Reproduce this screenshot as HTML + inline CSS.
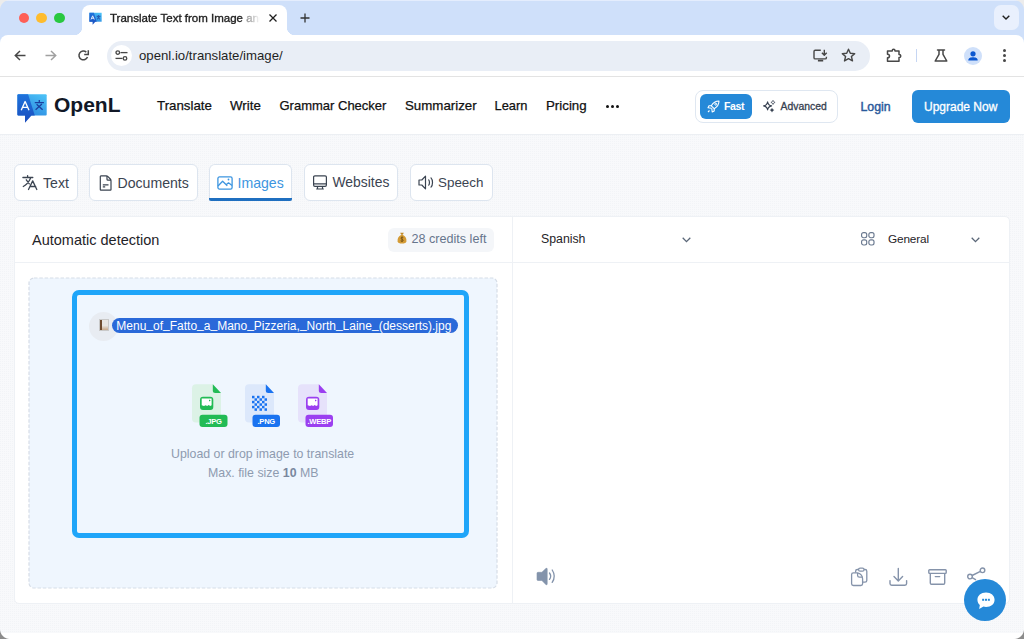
<!DOCTYPE html>
<html><head><meta charset="utf-8">
<style>
*{box-sizing:border-box;margin:0;padding:0}
html,body{width:1024px;height:639px;overflow:hidden;background:#fff;font-family:"Liberation Sans",sans-serif}
.a{position:absolute}
.t{position:absolute;white-space:nowrap;line-height:1}
svg{position:absolute;overflow:visible}
/* chrome */
#strip{left:0;top:0;width:1024px;height:44px;background:#cfe0fa}
#toolbar{left:0;top:35px;width:1024px;height:42px;background:#fff;border-bottom:1px solid #e3e3e3}
#page{left:0;top:77px;width:1024px;height:556px;background:#f8f9fb}
.nav{font-size:13.3px;color:#111;-webkit-text-stroke:0.25px #111}
.tabbtn{top:164px;height:37px;background:#fff;border:1px solid #dde5ef;border-radius:6px}
.tabtxt{font-size:14.1px;color:#3b4451}
</style></head><body>
<!-- tab strip -->
<div id="strip" class="a"></div>
<div class="a" style="left:0;top:0;width:1024px;height:1px;background:#e4edfd"></div>
<!-- traffic lights -->
<div class="a" style="left:18.5px;top:12.7px;width:10.8px;height:10.8px;border-radius:50%;background:#fe5f57"></div>
<div class="a" style="left:36.3px;top:12.7px;width:10.8px;height:10.8px;border-radius:50%;background:#febc2e"></div>
<div class="a" style="left:54.1px;top:12.7px;width:10.8px;height:10.8px;border-radius:50%;background:#28c840"></div>
<!-- active tab -->
<div class="a" style="left:82px;top:5px;width:205px;height:30px;background:#fff;border-radius:8px 8px 0 0"></div>
<div class="a" style="left:74px;top:27px;width:8px;height:8px;background:radial-gradient(circle at 0 0,#cfe0fa 8px,#fff 8.5px)"></div>
<div class="a" style="left:287px;top:27px;width:8px;height:8px;background:radial-gradient(circle at 100% 0,#cfe0fa 8px,#fff 8.5px)"></div>
<svg style="left:88.3px;top:11px" width="15.05" height="15.05" viewBox="0 0 36 36"><defs><linearGradient id="fgl" x1="0" y1="0" x2="0" y2="1"><stop offset="0" stop-color="#1f73dc"/><stop offset="1" stop-color="#1a4dbd"/></linearGradient><linearGradient id="fgr" x1="1" y1="0" x2="0.3" y2="1"><stop offset="0" stop-color="#4ec5f8"/><stop offset="1" stop-color="#2a86df"/></linearGradient></defs><path d="M3.4 4.2H32.7V25.6H3.4Z" fill="url(#fgr)"/><path d="M3.4 4.2H14.1L20.8 25.6H17.5L11 32.7V25.6H3.4Z" fill="url(#fgl)"/><path d="M7.2 20.3L11.1 11.5L15 20.3M8.6 17.3H13.6" stroke="#fff" stroke-width="2" fill="none"/><path d="M20.8 12.6H29.9M25.3 10.1V12.6M22.6 14.2L28.6 19.8M27.9 14L21.6 19.8" stroke="#1b3f9e" stroke-width="2" fill="none"/></svg>
<div class="t" style="left:110px;top:12.5px;font-size:11.5px;color:#1f1f1f;-webkit-text-stroke:0.35px #1f1f1f;width:150px;overflow:hidden;-webkit-mask-image:linear-gradient(90deg,#000 0,#000 87%,rgba(0,0,0,0.5) 91%,rgba(0,0,0,0.25) 96%,transparent 100%)">Translate Text from Image and Photo</div>
<svg style="left:269px;top:14px" width="8" height="8" viewBox="0 0 8 8"><path d="M0.5 0.5L7.5 7.5M7.5 0.5L0.5 7.5" stroke="#1f1f1f" stroke-width="1.3"/></svg>
<svg style="left:300px;top:13px" width="10" height="10" viewBox="0 0 10 10"><path d="M5 0.5V9.5M0.5 5H9.5" stroke="#333" stroke-width="1.3"/></svg>
<div class="a" style="left:994px;top:5px;width:25px;height:25px;border-radius:7px;background:#e9f0fd"></div>
<svg style="left:1002px;top:15px" width="8" height="5" viewBox="0 0 8 5"><path d="M0.7 0.7L4 4L7.3 0.7" stroke="#1f1f1f" stroke-width="1.4" fill="none"/></svg>

<!-- toolbar -->
<div id="toolbar" class="a" style="border-radius:8px 8px 0 0"></div>
<svg style="left:14px;top:50px" width="12" height="11" viewBox="0 0 12 11"><path d="M11.5 5.5H1.5M6 1L1.3 5.5L6 10" stroke="#474747" stroke-width="1.5" fill="none"/></svg>
<svg style="left:45px;top:50px" width="12" height="11" viewBox="0 0 12 11"><path d="M0.5 5.5H10.5M6 1L10.7 5.5L6 10" stroke="#a0a0a0" stroke-width="1.5" fill="none"/></svg>
<svg style="left:77px;top:49px" width="13" height="13" viewBox="0 0 13 13"><path d="M10.5 8A4.4 4.4 0 1 1 9.3 3.1" stroke="#474747" stroke-width="1.5" fill="none"/><path d="M7.2 5.4H11.3V1.2" stroke="#474747" stroke-width="1.5" fill="none"/></svg>
<div class="a" style="left:107px;top:41px;width:763px;height:30px;border-radius:15px;background:#e9eef6"></div>
<div class="a" style="left:111px;top:45px;width:21px;height:21px;border-radius:50%;background:#fff"></div>
<svg style="left:115px;top:50px" width="13" height="11" viewBox="0 0 13 11"><circle cx="2.8" cy="2.6" r="1.8" stroke="#474747" stroke-width="1.3" fill="none"/><path d="M5.5 2.6H12.5" stroke="#474747" stroke-width="1.3"/><circle cx="10" cy="8.4" r="1.8" stroke="#474747" stroke-width="1.3" fill="none"/><path d="M0.5 8.4H7.5" stroke="#474747" stroke-width="1.3"/></svg>
<div class="t" style="left:139px;top:49px;font-size:13.2px;color:#1f1f1f">openl.io/translate/image/</div>
<svg style="left:806px;top:42px" width="30" height="24" viewBox="0 0 30 24"><g stroke="#474747" fill="none" stroke-linejoin="round"><path d="M14.8 8.3H9.2Q8 8.3 8 9.5V15.7Q8 16.9 9.2 16.9H19.2Q20.4 16.9 20.4 15.7V14.8" stroke-width="1.4"/><path d="M11.9 18.6H17.2" stroke-width="1.8"/><path d="M18.3 7.8V13M15.9 10.8L18.3 13.2L20.7 10.8" stroke-width="1.4"/></g></svg>
<svg style="left:841px;top:48px" width="15" height="15" viewBox="0 0 15 15"><path d="M7.5 1.2L9.3 5.3L13.7 5.6L10.4 8.5L11.5 12.9L7.5 10.6L3.5 12.9L4.6 8.5L1.3 5.6L5.7 5.3Z" stroke="#474747" stroke-width="1.4" fill="none" stroke-linejoin="round"/></svg>
<svg style="left:880px;top:44px" width="24" height="24" viewBox="0 0 24 24"><path d="M7.5 6.9H12.2Q12.2 5.3 13.6 5.3Q15 5.3 15 6.9H19V10.4Q20.8 10.4 20.8 12Q20.8 13.6 19 13.6V17.3H7.5V13.8Q9.5 13.8 9.5 12Q9.5 10.2 7.5 10.2Z" stroke="#474747" stroke-width="1.5" fill="none" stroke-linejoin="round"/></svg>
<div class="a" style="left:916px;top:49px;width:1px;height:13px;background:#c6d6f3"></div>
<svg style="left:934px;top:48px" width="14" height="15" viewBox="0 0 14 15"><path d="M3.5 2H10.5M5 2V6.3L1.2 13H12.8L9 6.3V2" stroke="#474747" stroke-width="1.5" fill="none" stroke-linejoin="round" stroke-linecap="round"/></svg>
<div class="a" style="left:964px;top:47px;width:18px;height:18px;border-radius:50%;background:#cfe0fa"></div>
<svg style="left:966px;top:49px" width="14" height="14" viewBox="0 0 14 14"><circle cx="7" cy="4.8" r="2.6" fill="#0b57d0"/><path d="M2.3 11.5C2.3 9 4.5 8.3 7 8.3C9.5 8.3 11.7 9 11.7 11.5Z" fill="#0b57d0"/></svg>
<div class="a" style="left:1003px;top:49.1px;width:3px;height:3px;border-radius:50%;background:#474747"></div>
<div class="a" style="left:1003px;top:54.1px;width:3px;height:3px;border-radius:50%;background:#474747"></div>
<div class="a" style="left:1003px;top:59.2px;width:3px;height:3px;border-radius:50%;background:#474747"></div>

<!-- page -->
<div id="page" class="a"><svg style="left:0;top:0" width="1024" height="556"><defs><pattern id="dots" width="2" height="2" patternUnits="userSpaceOnUse"><rect x="0" y="0" width="1" height="1" fill="#f2f4f7"/></pattern></defs><rect width="1024" height="556" fill="url(#dots)"/></svg></div>
<!-- navbar -->
<div class="a" style="left:0;top:77px;width:1024px;height:58px;background:#fff;border-bottom:1px solid #eceff3"></div>

<!-- logo -->
<svg style="left:14px;top:90px" width="36" height="36" viewBox="0 0 36 36"><defs><linearGradient id="lgl" x1="0" y1="0" x2="0" y2="1"><stop offset="0" stop-color="#1f73dc"/><stop offset="1" stop-color="#1a4dbd"/></linearGradient><linearGradient id="lgr" x1="1" y1="0" x2="0.3" y2="1"><stop offset="0" stop-color="#4ec5f8"/><stop offset="1" stop-color="#2a86df"/></linearGradient></defs><path d="M3.4 5.2Q3.4 4.2 4.4 4.2H31.7Q32.7 4.2 32.7 5.2V24.6Q32.7 25.6 31.7 25.6H4.4Q3.4 25.6 3.4 24.6Z" fill="url(#lgr)"/><path d="M4.4 4.2H14.1L20.8 25.6H17.5L11 32.7V25.6H4.4Q3.4 25.6 3.4 24.6V5.2Q3.4 4.2 4.4 4.2Z" fill="url(#lgl)"/><path d="M7.2 20.3L11.1 11.5L15 20.3M8.6 17.3H13.6" stroke="#fff" stroke-width="1.35" fill="none" stroke-linejoin="round"/><path d="M20.8 12.6H29.9M25.3 10.1V12.6M22.6 14.2L28.6 19.8M27.9 14L21.6 19.8" stroke="#1b3f9e" stroke-width="1.3" fill="none"/></svg>
<div class="t" style="left:54px;top:93.7px;font-size:21px;font-weight:bold;color:#111827">OpenL</div>
<div class="t nav" style="left:157px;top:99px">Translate</div>
<div class="t nav" style="left:230px;top:99px">Write</div>
<div class="t nav" style="left:279.5px;top:99px;font-size:13px">Grammar Checker</div>
<div class="t nav" style="left:405px;top:99px">Summarizer</div>
<div class="t nav" style="left:494.5px;top:99.5px;font-size:12.9px">Learn</div>
<div class="t nav" style="left:546px;top:99px">Pricing</div>
<div class="a" style="left:606px;top:105px;width:3px;height:3px;border-radius:50%;background:#111"></div>
<div class="a" style="left:611px;top:105px;width:3px;height:3px;border-radius:50%;background:#111"></div>
<div class="a" style="left:616px;top:105px;width:3px;height:3px;border-radius:50%;background:#111"></div>
<!-- mode toggle -->
<div class="a" style="left:695px;top:89.5px;width:143px;height:33px;border:1px solid #dfe7f1;border-radius:8px;background:#fff"></div>
<div class="a" style="left:699.5px;top:94px;width:52.5px;height:24.5px;border-radius:6px;background:#2589d8"></div>
<svg style="left:707px;top:100px" width="13" height="13" viewBox="0 0 13 13"><path d="M12 1C8.5 1 6 2.8 4.3 5.8L7.2 8.7C10.2 7 12 4.5 12 1Z" stroke="#fff" stroke-width="1.1" fill="none" stroke-linejoin="round"/><path d="M4.3 5.8H2L1 7.8L4.6 8.2M7.2 8.7V11L5.2 12L4.8 8.4" stroke="#fff" stroke-width="1.1" fill="none" stroke-linejoin="round"/><circle cx="8.8" cy="4.2" r="1" stroke="#fff" stroke-width="1" fill="none"/><path d="M2.5 10.5L1 12" stroke="#fff" stroke-width="1.1"/></svg>
<div class="t" style="left:724px;top:100.6px;font-size:10.6px;letter-spacing:-0.4px;font-weight:bold;color:#fff">Fast</div>
<svg style="left:763px;top:100px" width="13" height="13" viewBox="0 0 13 13"><path d="M4.6 1.8C5 4.4 6 5.4 8.6 5.9C6 6.4 5 7.4 4.6 10C4.2 7.4 3.2 6.4 0.6 5.9C3.2 5.4 4.2 4.4 4.6 1.8Z" stroke="#374151" stroke-width="1.1" fill="none" stroke-linejoin="round"/><path d="M10 0.3L10.7 1.7L12.1 2.4L10.7 3.1L10 4.5L9.3 3.1L7.9 2.4L9.3 1.7Z" stroke="#374151" stroke-width="0.7" fill="none"/><path d="M9 7.8L9.8 9.3L11.3 10.1L9.8 10.9L9 12.4L8.2 10.9L6.7 10.1L8.2 9.3Z" fill="#374151"/></svg>
<div class="t" style="left:780.5px;top:101.8px;font-size:10.4px;color:#374151;-webkit-text-stroke:0.3px #374151">Advanced</div>
<div class="t" style="left:860.5px;top:101px;font-size:12.3px;color:#2a5a9c;-webkit-text-stroke:0.45px #2a5a9c">Login</div>
<div class="a" style="left:912px;top:89.5px;width:98px;height:33.5px;border-radius:6px;background:#2589d8"></div>
<div class="t" style="left:924px;top:101.3px;font-size:12px;color:#fff;-webkit-text-stroke:0.3px #fff">Upgrade Now</div>

<!-- mode tabs -->
<div class="a tabbtn" style="left:14px;width:64px"></div>
<svg style="left:18px;top:170px" width="24" height="24" viewBox="0 0 24 24"><g stroke="#3b4451" stroke-width="1.3" fill="none" stroke-linecap="round" stroke-linejoin="round"><path d="M4.9 7.5H14.8M9.6 5.6V7.5M8.3 9.8L11.3 13.9M12.4 8.6Q10 14 5.3 16.5"/><path d="M10.5 19.5L14.7 10.9L18.8 19.5M12 16.5H17.7"/></g></svg>
<div class="t tabtxt" style="left:43px;top:175.5px">Text</div>
<div class="a tabbtn" style="left:88.5px;width:109px"></div>
<svg style="left:98.5px;top:174.5px" width="13" height="16" viewBox="0 0 13 16"><path d="M1.3 1.5Q1.3 0.9 1.9 0.9H7.3Q8.2 0.9 9 1.7L11.3 4Q12 4.8 12 5.7V14.5Q12 15.1 11.4 15.1H1.9Q1.3 15.1 1.3 14.5Z" stroke="#3b4451" stroke-width="1.2" fill="none" stroke-linejoin="round"/><path d="M8 1V4.2Q8 5.1 8.9 5.1H12M3.8 9.8H9.5M3.8 11.8H6.2" stroke="#3b4451" stroke-width="1.2" fill="none"/></svg>
<div class="t tabtxt" style="left:117.5px;top:175.5px">Documents</div>
<div class="a tabbtn" style="left:208.5px;width:83px;border-bottom:none;border-radius:6px 6px 0 0"></div>
<div class="a" style="left:208.5px;top:197.5px;width:83px;height:3px;background:#1f6fc0;border-radius:0 0 2px 2px"></div>
<svg style="left:217px;top:175.5px" width="16" height="14" viewBox="0 0 16 14"><g stroke="#3d95e0" stroke-width="1.3" fill="none" stroke-linejoin="round"><rect x="0.9" y="0.9" width="14.2" height="12.2" rx="1.6"/><path d="M1 10L5.6 5.2L10.3 9.8M9.2 8.7L11.5 6.8L15 9.5"/></g><circle cx="11.5" cy="3.5" r="0.9" fill="#3d95e0"/></svg>
<div class="t tabtxt" style="left:237.5px;top:175.5px;color:#3d95e0">Images</div>
<div class="a tabbtn" style="left:303.5px;width:94px"></div>
<svg style="left:313px;top:175px" width="14" height="15" viewBox="0 0 14 15"><g stroke="#3b4451" stroke-width="1.2" fill="none" stroke-linejoin="round"><rect x="0.6" y="0.8" width="12.8" height="10.5" rx="1.3"/><path d="M0.6 8.8H13.4M4.5 11.3V13.8M9.5 11.3V13.8M3.2 14H10.8"/></g></svg>
<div class="t tabtxt" style="left:332.5px;top:175.5px;font-size:13.9px">Websites</div>
<div class="a tabbtn" style="left:409.5px;width:83px"></div>
<svg style="left:418px;top:175px" width="16" height="15" viewBox="0 0 16 15"><path d="M1 5H3.8L7.5 1.2V13.8L3.8 10H1Z" stroke="#3b4451" stroke-width="1.2" fill="none" stroke-linejoin="round"/><path d="M10.7 4.8C11.7 5.8 11.7 9.2 10.7 10.2M13 2.8C15 4.8 15 10.2 13 12.2" stroke="#3b4451" stroke-width="1.2" fill="none" stroke-linecap="round"/></svg>
<div class="t tabtxt" style="left:438px;top:175.5px;font-size:13.4px">Speech</div>

<!-- main card -->
<div class="a" style="left:14px;top:215.5px;width:996px;height:388px;background:#fff;border:1px solid #eef1f5;border-radius:5px"></div>
<div class="a" style="left:14px;top:262px;width:996px;height:1px;background:#eef1f5"></div>
<div class="a" style="left:512px;top:216px;width:1px;height:387px;background:#eef1f5"></div>
<div class="t" style="left:32px;top:232.5px;font-size:14.5px;color:#1f2328">Automatic detection</div>
<div class="a" style="left:388px;top:227.5px;width:106px;height:24px;border-radius:6px;background:#f4f6f9"></div>
<svg style="left:397px;top:232px" width="10" height="12" viewBox="0 0 10 12"><path d="M3.2 0.8H6.8L5.8 2.8H4.2Z" fill="#c08a2a"/><path d="M4 3C1.2 4.6 0.3 7 0.6 9.2C0.9 11 2.5 11.6 5 11.6C7.5 11.6 9.1 11 9.4 9.2C9.7 7 8.8 4.6 6 3Z" fill="#d49b35"/><path d="M6.3 5.6C5.8 5.1 4 5 4 6.2C4 7.4 6.2 7 6.2 8.4C6.2 9.5 4.3 9.4 3.6 8.8M5 4.5V10" stroke="#6b4a12" stroke-width="0.8" fill="none"/></svg>
<div class="t" style="left:411.5px;top:232.5px;font-size:12.6px;color:#66758c">28 credits left</div>
<div class="t" style="left:541px;top:233px;font-size:12.3px;color:#1f2328">Spanish</div>
<svg style="left:681.5px;top:236.5px" width="9" height="6" viewBox="0 0 9 6"><path d="M0.7 0.8L4.5 4.6L8.3 0.8" stroke="#5b6778" stroke-width="1.3" fill="none"/></svg>
<svg style="left:860.7px;top:232.3px" width="13.6" height="13.6" viewBox="0 0 14 14"><g stroke="#6b7a90" stroke-width="1.2" fill="none"><rect x="0.6" y="0.6" width="5.3" height="5.3" rx="2"/><rect x="8.1" y="0.6" width="5.3" height="5.3" rx="2"/><rect x="0.6" y="8.1" width="5.3" height="5.3" rx="2"/><rect x="8.1" y="8.1" width="5.3" height="5.3" rx="2"/></g></svg>
<div class="t" style="left:888px;top:233.8px;font-size:11.8px;letter-spacing:-0.15px;color:#1f2328">General</div>
<svg style="left:971px;top:236.5px" width="9" height="6" viewBox="0 0 9 6"><path d="M0.7 0.8L4.5 4.6L8.3 0.8" stroke="#5b6778" stroke-width="1.3" fill="none"/></svg>

<!-- drop zone -->
<svg style="left:28px;top:277px" width="470" height="312" viewBox="0 0 470 312"><rect x="1" y="1" width="468" height="310" rx="5" fill="#eff6fe" stroke="#d6dde7" stroke-width="1.2" stroke-dasharray="3.5 1.8"/></svg>
<div class="a" style="left:72px;top:289.5px;width:397px;height:248px;border:5.5px solid #1fa5f9;border-radius:7px"></div>
<div class="a" style="left:89px;top:311.5px;width:29px;height:29px;border-radius:50%;background:#e8ecf2"></div>
<div class="a" style="left:98.5px;top:319px;width:10.5px;height:12px;border:0.6px solid #c9c9c9;background:linear-gradient(90deg,#6e4c30 0 2px,transparent 2px 8.3px,#6e4c30 8.3px),linear-gradient(180deg,#e8e6e3 0 55%,#c9a98a 100%)"></div>
<div class="a" style="left:112px;top:317.5px;width:346px;height:15px;border-radius:7.5px;background:#2a69d9"></div>
<div class="t" style="left:116.3px;top:319.5px;font-size:12px;color:#fff">Menu<span style="position:relative;top:-1.5px">_</span>of<span style="position:relative;top:-1.5px">_</span>Fatto<span style="position:relative;top:-1.5px">_</span>a<span style="position:relative;top:-1.5px">_</span>Mano<span style="position:relative;top:-1.5px">_</span>Pizzeria,<span style="position:relative;top:-1.5px">_</span>North<span style="position:relative;top:-1.5px">_</span>Laine<span style="position:relative;top:-1.5px">_</span>(desserts).jpg</div>

<!-- file icons -->
<svg style="left:192px;top:384px" width="36" height="44" viewBox="0 0 36 44"><path d="M4 0.3H20.8L29 9V34.3Q29 38.5 25 38.5H4Q0 38.5 0 34.5V4.3Q0 0.3 4 0.3Z" fill="#dcf2e6"/><path d="M20.8 0.3L29 9H23.3Q20.8 9 20.8 6.5Z" fill="#22bb55"/><rect x="8" y="12.8" width="13.3" height="13.3" rx="3" fill="#22bb55"/><path d="M9.7 14.5H19.6V21.2L18.2 21.9L16.7 21.1L15.2 22L13.6 21.2L12 21.9L9.7 21.3Z" fill="#fff"/><path d="M17 15.6L18.8 16.5L17 17.4Z" fill="#22bb55"/><rect x="7.5" y="30.7" width="28" height="12.2" rx="3" fill="#22bb55"/><text x="21.5" y="40.3" text-anchor="middle" font-family="Liberation Sans" font-weight="bold" font-size="7.6" fill="#fff" letter-spacing="-0.3">.JPG</text></svg>
<svg style="left:245px;top:384px" width="35.5" height="44" viewBox="0 0 35.5 44"><path d="M4 0.3H20.8L29 9V34.3Q29 38.5 25 38.5H4Q0 38.5 0 34.5V4.3Q0 0.3 4 0.3Z" fill="#dce8fb"/><path d="M20.8 0.3L29 9H23.3Q20.8 9 20.8 6.5Z" fill="#1a73f0"/><rect x="7.00" y="11.80" width="2.5" height="2.5" fill="#1a73f0"/><rect x="12.00" y="11.80" width="2.5" height="2.5" fill="#1a73f0"/><rect x="17.00" y="11.80" width="2.5" height="2.5" fill="#1a73f0"/><rect x="9.50" y="14.30" width="2.5" height="2.5" fill="#1a73f0"/><rect x="14.50" y="14.30" width="2.5" height="2.5" fill="#1a73f0"/><rect x="19.50" y="14.30" width="2.5" height="2.5" fill="#1a73f0"/><rect x="7.00" y="16.80" width="2.5" height="2.5" fill="#1a73f0"/><rect x="12.00" y="16.80" width="2.5" height="2.5" fill="#1a73f0"/><rect x="17.00" y="16.80" width="2.5" height="2.5" fill="#1a73f0"/><rect x="9.50" y="19.30" width="2.5" height="2.5" fill="#1a73f0"/><rect x="14.50" y="19.30" width="2.5" height="2.5" fill="#1a73f0"/><rect x="19.50" y="19.30" width="2.5" height="2.5" fill="#1a73f0"/><rect x="7.00" y="21.80" width="2.5" height="2.5" fill="#1a73f0"/><rect x="12.00" y="21.80" width="2.5" height="2.5" fill="#1a73f0"/><rect x="17.00" y="21.80" width="2.5" height="2.5" fill="#1a73f0"/><rect x="9.50" y="24.30" width="2.5" height="2.5" fill="#1a73f0"/><rect x="14.50" y="24.30" width="2.5" height="2.5" fill="#1a73f0"/><rect x="19.50" y="24.30" width="2.5" height="2.5" fill="#1a73f0"/><rect x="7.5" y="30.7" width="27.5" height="12.2" rx="3" fill="#1a73f0"/><text x="21.25" y="40.3" text-anchor="middle" font-family="Liberation Sans" font-weight="bold" font-size="7.6" fill="#fff" letter-spacing="-0.3">.PNG</text></svg>
<svg style="left:298px;top:384px" width="35.5" height="44" viewBox="0 0 35.5 44"><path d="M4 0.3H20.8L29 9V34.3Q29 38.5 25 38.5H4Q0 38.5 0 34.5V4.3Q0 0.3 4 0.3Z" fill="#e6e2fb"/><path d="M20.8 0.3L29 9H23.3Q20.8 9 20.8 6.5Z" fill="#9b3ff0"/><rect x="8" y="12.8" width="13.3" height="13.3" rx="3" fill="#9b3ff0"/><path d="M9.7 14.5H19.6V21.2L18.2 21.9L16.7 21.1L15.2 22L13.6 21.2L12 21.9L9.7 21.3Z" fill="#fff"/><path d="M17 15.6L18.8 16.5L17 17.4Z" fill="#9b3ff0"/><rect x="7.5" y="30.7" width="27.5" height="12.2" rx="3" fill="#9b3ff0"/><text x="21.25" y="40.3" text-anchor="middle" font-family="Liberation Sans" font-weight="bold" font-size="7.6" fill="#fff" letter-spacing="-0.3">.WEBP</text></svg>

<div class="t" style="left:171px;top:448px;font-size:12.35px;color:#8e9bb0">Upload or drop image to translate</div>
<div class="t" style="left:208px;top:467px;font-size:12.35px;color:#8e9bb0">Max. file size <b style="color:#7a889e">10</b> MB</div>

<!-- right panel bottom icons -->
<svg style="left:525px;top:555px" width="50" height="45" viewBox="0 0 50 45"><path d="M12 18.3Q12 17.3 13 17.3H16.9L20.8 13.6Q22.2 12.4 22.2 14.2V28.8Q22.2 30.6 20.8 29.4L16.9 25.5H13Q12 25.5 12 24.5Z" fill="#8393ab" stroke="#8393ab" stroke-width="0.6" stroke-linejoin="round"/><path d="M24.5 18Q26.9 21.2 24.5 24.4M27.2 15Q31.3 21.2 27.2 27.4" stroke="#8393ab" stroke-width="1.3" fill="none" stroke-linecap="round"/></svg>
<svg style="left:845px;top:562px" width="30" height="30" viewBox="0 0 30 30"><g stroke="#8593aa" stroke-width="1.3" fill="none" stroke-linejoin="round"><path d="M10.6 10.8V9.3Q10.6 7.5 12.4 7.5H20Q21.8 7.5 21.8 9.3V18.4Q21.8 20.2 20 20.2H17.6"/><rect x="13.6" y="6.1" width="5.4" height="3.1" rx="1.5" fill="#fff"/><path d="M8.4 10.8H12.6Q17.6 12.2 17.6 17V21.7Q17.6 23.5 15.8 23.5H8.4Q6.6 23.5 6.6 21.7V12.6Q6.6 10.8 8.4 10.8Z" fill="#fff"/><path d="M12.6 11V13.4Q12.6 15.2 14.4 15.2H17.3"/></g></svg>
<svg style="left:885px;top:562px" width="30" height="30" viewBox="0 0 30 30"><g stroke="#8593aa" stroke-width="1.4" fill="none" stroke-linecap="round" stroke-linejoin="round"><path d="M13.3 6.5V18.8M9 14.6L13.3 18.9L17.6 14.6"/><path d="M5 18.6V21.5Q5 23.2 6.7 23.2H19.9Q21.6 23.2 21.6 21.5V18.6"/></g></svg>
<svg style="left:928px;top:569px" width="19" height="16" viewBox="0 0 19 16"><g stroke="#8593aa" stroke-width="1.4" fill="none" stroke-linejoin="round"><rect x="0.8" y="0.8" width="17.4" height="3.6" rx="0.8"/><path d="M2.3 4.4V14Q2.3 15.2 3.5 15.2H15.5Q16.7 15.2 16.7 14V4.4"/><path d="M7.3 7.6H11.7" stroke-linecap="round"/></g></svg>
<svg style="left:967px;top:567px" width="19" height="16" viewBox="0 0 19 16"><g stroke="#8593aa" stroke-width="1.4" fill="none"><circle cx="15.5" cy="3.3" r="2.3"/><circle cx="3" cy="9.6" r="2.3"/><path d="M13.4 4.4L5.1 8.5M5.1 10.7L9 12.8"/></g></svg>
<div class="a" style="left:964px;top:579px;width:42px;height:42px;border-radius:50%;background:#2589d8"></div>
<svg style="left:974.5px;top:590.3px" width="22" height="22" viewBox="0 0 20 20"><path d="M10 2.2C14.6 2.2 17.8 5 17.8 8.8C17.8 12.6 14.6 15.4 10 15.4C9.2 15.4 8.4 15.3 7.7 15.1L3.8 17.3L4.4 13.6C3 12.4 2.2 10.7 2.2 8.8C2.2 5 5.4 2.2 10 2.2Z" fill="#fff"/><rect x="6.5" y="8" width="1.8" height="1.8" fill="#2589d8"/><rect x="9.1" y="8" width="1.8" height="1.8" fill="#2589d8"/><rect x="11.7" y="8" width="1.8" height="1.8" fill="#2589d8"/></svg>
<!-- bottom window strip -->
<div class="a" style="left:0;top:633px;width:1024px;height:6px;background:#fff"></div>

<!-- window corners -->
<div class="a" style="left:0;top:0;width:10px;height:10px;background:radial-gradient(circle at 100% 100%,transparent 9.5px,#ececec 10.5px)"></div>
<div class="a" style="left:1014px;top:0;width:10px;height:10px;background:radial-gradient(circle at 0 100%,transparent 9.5px,#ececec 10.5px)"></div>
<div class="a" style="left:0;top:629px;width:10px;height:10px;background:radial-gradient(circle at 100% 0,transparent 9.5px,#8c8c8c 10.5px)"></div>
<div class="a" style="left:1014px;top:629px;width:10px;height:10px;background:radial-gradient(circle at 0 0,transparent 9.5px,#8c8c8c 10.5px)"></div>
</body></html>
